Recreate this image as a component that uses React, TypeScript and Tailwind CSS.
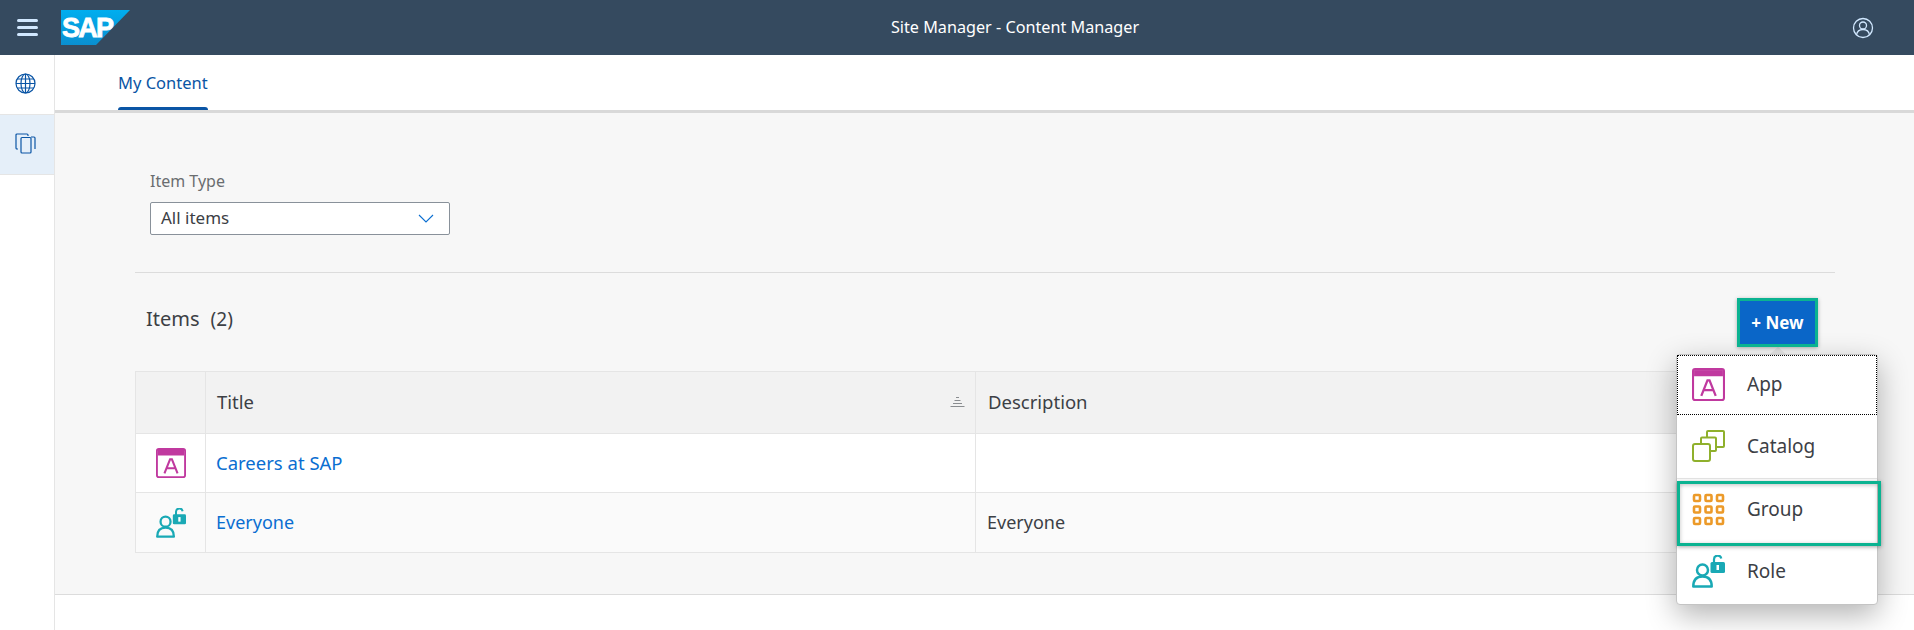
const font = "font-['Noto_Sans','Open_Sans',sans-serif]";

const AppIcon = ({ size }: { size: number }) => (
  <svg width={size} height={size} viewBox="0 0 32 32">
    <rect x="1" y="1" width="30" height="30" rx="2" fill="#fff" stroke="#c0399f" strokeWidth="2" />
    <path d="M2 2h28v6H2z" fill="#c0399f" />
    <path d="M9 27l6-15h2l6 15M11.500 21.500h9" fill="none" stroke="#c0399f" strokeWidth="2.200" />
  </svg>
);

const CatalogIcon = () => (
  <svg width="33" height="33" viewBox="0 0 33 33" fill="none" stroke="#8fb02c" strokeWidth="2">
    <rect x="1" y="14" width="17" height="17" rx="2" />
    <path d="M9 13V8.500a1 1 0 0 1 1-1h13a1 1 0 0 1 1 1V20a1 1 0 0 1-1 1h-4" />
    <path d="M15 7V2a1 1 0 0 1 1-1h15a1 1 0 0 1 1 1v14a1 1 0 0 1-1 1h-6" />
  </svg>
);

const GroupIcon = () => (
  <svg width="33" height="33" viewBox="0 0 33 33" fill="none" stroke="#ec9a29" strokeWidth="2.600">
    {[2, 13.500, 25].map((y) =>
      [2, 13.500, 25].map((x) => <rect key={`${x}-${y}`} x={x} y={y} width="6" height="6" rx="1" />)
    )}
  </svg>
);

const RoleIcon = ({ size }: { size: number }) => (
  <svg width={size} height={size} viewBox="0 0 33 33" fill="none">
    <circle cx="10.500" cy="15" r="5.500" stroke="#19a9b5" strokeWidth="2.500" />
    <path d="M1.300 31.500c0-6.500 3.500-10 9.200-10s9.200 3.500 9.200 10z" stroke="#19a9b5" strokeWidth="2.500" strokeLinejoin="round" />
    <path d="M22 8V4.500a3.700 3.700 0 0 1 7.300-1" stroke="#19a9b5" strokeWidth="2.200" />
    <rect x="18.500" y="7" width="14.500" height="11" rx="1.500" fill="#19a9b5" />
    <rect x="24.500" y="10" width="2.500" height="5" fill="#fff" />
  </svg>
);

const SapLogo = () => (
  <svg width="69" height="35" viewBox="0 0 69 35">
    <defs>
      <linearGradient id="sapfill" x1="0" y1="0" x2="0" y2="1">
        <stop offset="0" stopColor="#00aeef" />
        <stop offset="1" stopColor="#0a8fd0" />
      </linearGradient>
    </defs>
    <polygon points="0,0 69,0 35,35 0,35" fill="url(#sapfill)" />
    <text x="1" y="27" fill="#fff" stroke="#fff" strokeWidth="0.800" fontFamily="Liberation Sans" fontWeight="700" fontSize="27" letterSpacing="-1.800">
      SAP
    </text>
  </svg>
);

const MenuItem = ({ icon, label, className }: { icon: React.ReactNode; label: string; className: string }) => (
  <div className={`flex items-center pl-[15px] ${className}`}>
    <div className="w-[33px] flex justify-center">{icon}</div>
    <span className="ml-[22px] text-[19px] text-[#3c4045]">{label}</span>
  </div>
);

export default function App() {
  return (
    <div className={`w-[1914px] h-[630px] flex flex-col overflow-hidden bg-white relative ${font}`}>
      <header className="h-[55px] bg-[#354a5f] grid grid-cols-[120px_1fr_80px] items-center shrink-0">
        <div className="flex items-center">
          <div className="ml-[17px] w-[21px] shrink-0 flex flex-col gap-[4px]">
            <div className="h-[3px] rounded-sm bg-[#d1e8ff]" />
            <div className="h-[3px] rounded-sm bg-[#d1e8ff]" />
            <div className="h-[3px] rounded-sm bg-[#d1e8ff]" />
          </div>
          <div className="ml-[23px] flex shrink-0">
            <SapLogo />
          </div>
        </div>
        <div className="pl-[76px] text-center text-white text-[16.200px]">Site Manager - Content Manager</div>
        <div className="flex justify-end pr-[40px]">
          <svg width="22" height="22" viewBox="0 0 22 22" fill="none" stroke="#d1e8ff" strokeWidth="1.300">
            <circle cx="11" cy="11" r="9.500" />
            <circle cx="11" cy="8.500" r="3.500" />
            <path d="M4.500 18c.5-3.500 3-5.500 6.500-5.500s6 2 6.500 5.500" />
          </svg>
        </div>
      </header>

      <div className="flex flex-1 min-h-0">
        <aside className="w-[55px] shrink-0 border-r border-[#e5e5e5] bg-white">
          <div className="h-[60px] border-b border-[#e5e5e5] flex items-center justify-center pb-[2px] pr-[4px]">
            <svg width="21" height="21" viewBox="0 0 21 21" fill="none" stroke="#0a55a5" strokeWidth="1.200">
              <circle cx="10.500" cy="10.500" r="9.500" />
              <ellipse cx="10.500" cy="10.500" rx="4.500" ry="9.500" />
              <path d="M10.500 1v19M2 6h17M1 10.500h19M2 15h17" />
            </svg>
          </div>
          <div className="h-[60px] bg-[#e5eff9] border-b border-[#e5e5e5] flex items-center justify-center pb-[2px] pr-[4px]">
            <svg width="21" height="21" viewBox="0 0 21 21" fill="none" stroke="#0a55a5" strokeWidth="1.200">
              <path d="M3 16H2a1 1 0 0 1-1-1V2a1 1 0 0 1 1-1h10a1 1 0 0 1 1 1v1" />
              <path d="M16 4h3a1 1 0 0 1 1 1v11" />
              <rect x="6" y="4.500" width="10" height="15.500" rx="1" />
            </svg>
          </div>
        </aside>

        <main className="flex-1 flex flex-col min-w-0">
          <nav className="h-[58px] shrink-0 bg-white border-b-[3px] border-[#d9d9d9] pl-[63px]">
            <div className="inline-flex flex-col h-[55px] justify-between">
              <span className="pt-[17px] text-[16.500px] leading-[22px] text-[#0a55a5]">My Content</span>
              <div className="h-[3px] rounded-t-sm bg-[#0a55a5]" />
            </div>
          </nav>

          <section className="h-[482px] shrink-0 bg-[#f7f7f7] border-b border-[#dcdcdc] pl-[80px] pt-[57px]">
            <div className="w-[1700px]">
              <div className="pl-[15px]">
                <div className="text-[16px] leading-[22px] text-[#6a6d70]">Item Type</div>
                <div className="mt-[10px] w-[300px] h-[33px] bg-white border border-[#89919a] rounded-[2px] flex items-center justify-between pl-[10px] pr-[15px]">
                  <span className="pb-[2px] text-[17px] text-[#3c4045]">All items</span>
                  <svg width="16" height="9" viewBox="0 0 16 9" fill="none" stroke="#0a6ed1" strokeWidth="1.100">
                    <path d="M1 1l7 7 7-7" />
                  </svg>
                </div>
              </div>

              <div className="mt-[37px] border-t border-[#dcdcdc]" />

              <div className="h-[98px] flex items-start justify-between">
                <div className="pl-[11px] pt-[31px] flex items-baseline text-[#3c4045]">
                  <span className="text-[20px]">Items</span>
                  <span className="ml-[11px] text-[19px]">(2)</span>
                </div>
              </div>

              <div className="border border-[#e5e5e5]">
                <div className="grid grid-cols-[69px_771px_1fr] h-[62px] pb-[2px] bg-[#f2f2f2] border-b border-[#e5e5e5] text-[18.500px] text-[#3c4045]">
                  <div />
                  <div className="-mb-[2px] pb-[2px] border-l border-[#e5e5e5] border-r flex items-center justify-between pl-[11px] pr-[10px]">
                    <span>Title</span>
                    <svg width="15" height="11" viewBox="0 0 15 11" stroke="#8a8d90" strokeWidth="1">
                      <path d="M6 1.500h3M4.500 4.500h6M3 7.500h9M0.500 10.500h14" />
                    </svg>
                  </div>
                  <div className="flex items-center pl-[12px]">Description</div>
                </div>
                <div className="grid grid-cols-[69px_771px_1fr] h-[59px] bg-white border-b border-[#e5e5e5]">
                  <div className="flex items-center justify-center">
                    <AppIcon size={30} />
                  </div>
                  <div className="border-l border-r border-[#e5e5e5] flex items-center pl-[10px] text-[#0a6ed1] text-[18.500px]">Careers at SAP</div>
                  <div />
                </div>
                <div className="grid grid-cols-[69px_771px_1fr] h-[59px] bg-[#fafafa]">
                  <div className="flex items-center justify-center">
                    <RoleIcon size={30} />
                  </div>
                  <div className="border-l border-r border-[#e5e5e5] flex items-center pl-[10px] text-[#0a6ed1] text-[18px]">Everyone</div>
                  <div className="flex items-center pl-[11px] text-[#3c4045] text-[18px]">Everyone</div>
                </div>
              </div>
            </div>
          </section>
          <div className="flex-1 bg-white" />
        </main>
      </div>

      {/* New button with its popup menu on top of the table */}
      <div className="absolute left-[1737px] top-[298px] w-[81px] h-[49px] border-[3px] border-[#0bb391] bg-[#0a66c8] flex items-center justify-center text-white font-bold text-[17px] shadow-[0_1px_4px_rgba(0,0,0,0.3)] z-20">
        + New
      </div>
      <div className="absolute left-[1769px] top-[347px] w-0 h-0 border-x-[9px] border-x-transparent border-b-[8px] border-b-[#e8e8e8] z-10" />
      <div className="absolute left-[1676px] top-[354px] w-[202px] h-[251px] bg-white rounded-[4px] border border-[#c4c4c4] shadow-[0_10px_30px_rgba(0,0,0,0.3)] flex flex-col z-10">
        <MenuItem icon={<AppIcon size={33} />} label="App" className="h-[60px] pb-[2px] outline-1 outline-dotted outline-black -outline-offset-1" />
        <MenuItem icon={<CatalogIcon />} label="Catalog" className="h-[63px] pb-[2px] border-b border-[#e5e5e5] mt-[1px]" />
        <MenuItem icon={<GroupIcon />} label="Group" className="h-[62px] pb-[1px]" />
        <MenuItem icon={<RoleIcon size={33} />} label="Role" className="flex-1 pb-[2px]" />
      </div>
      <div className="absolute left-[1677px] top-[481px] w-[204px] h-[65px] border-[3px] border-[#0bb391] shadow-[0_1px_4px_rgba(0,0,0,0.35),inset_0_1px_4px_rgba(0,0,0,0.25)] z-20" />
    </div>
  );
}
